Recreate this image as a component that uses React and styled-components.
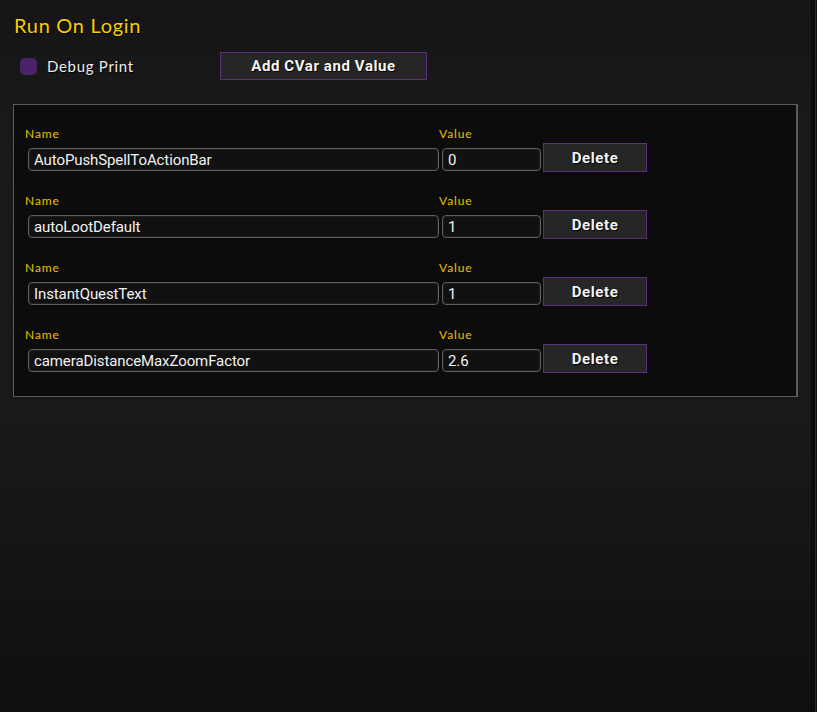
import React from 'react';
import styled, { createGlobalStyle } from 'styled-components';

const GlobalStyle = createGlobalStyle`
  html, body {
    margin: 0;
    padding: 0;
    background: #0e0e0f;
  }
`;

const Page = styled.div`
  position: relative;
  width: 817px;
  height: 712px;
  overflow: hidden;
  box-sizing: border-box;
  padding: 12px 20px 0 13px;
  background: linear-gradient(180deg, #151516 0%, #1a1a1c 20%, #19191b 60%, #0f0f10 100%);
  font-family: 'Open Sans', 'Liberation Sans', sans-serif;

  &::after {
    content: '';
    position: absolute;
    top: 0;
    right: 0;
    width: 6px;
    height: 100%;
    background: linear-gradient(90deg, #0c0c0c 0%, #0c0c0c 60%, #2a2a2a 60%, #2a2a2a 80%, #111 80%);
  }
`;

const Title = styled.h1`
  margin: 0 0 0 1px;
  font-family: 'Lato', 'Open Sans', sans-serif;
  font-weight: 400;
  font-size: 20px;
  line-height: 27px;
  letter-spacing: 0.7px;
  color: #f8cf00;
  text-shadow: 1px 1px 1px #000;
`;

const Toolbar = styled.div`
  display: flex;
  align-items: center;
  height: 28px;
  margin-top: 13px;
`;

const CheckLabel = styled.label`
  box-sizing: border-box;
  display: flex;
  align-items: center;
  gap: 10px;
  width: 207px;
  padding-left: 7px;
  font-family: 'Lato', 'Open Sans', sans-serif;
  font-size: 15px;
  color: #ececec;
  letter-spacing: 0.7px;
  text-shadow: 1px 1px 1px #000;
`;

const Box = styled.span`
  display: block;
  width: 17px;
  height: 17px;
  border-radius: 5px;
  background: #4b2368;
`;

const Button = styled.button`
  box-sizing: border-box;
  width: ${p => p.$w}px;
  height: ${p => p.$h}px;
  margin-left: ${p => p.$ml || 0}px;
  padding: 0;
  border: 1px solid #5b2f7a;
  background: #262626;
  color: #f4f4f4;
  font-family: 'Roboto', 'Liberation Sans', sans-serif;
  font-weight: 700;
  font-size: 15px;
  letter-spacing: 0.6px;
  text-shadow: 1px 1px 1px #000;
  cursor: pointer;
`;

const Panel = styled.div`
  box-sizing: border-box;
  width: 785px;
  height: 293px;
  margin-top: 24px;
  padding: 22px 0 0 11px;
  background: #0c0c0c;
  border: 1px solid #5c5c5c;
  border-right-width: 2px;
  display: flex;
  flex-direction: column;
  gap: 22px;
`;

const Entry = styled.div`
  display: grid;
  grid-template-columns: 414px 101px 104px;
  grid-template-rows: 14px auto;
  row-gap: 2px;
  align-items: end;
`;

const FieldLabel = styled.span`
  font-family: 'Lato', 'Open Sans', sans-serif;
  font-size: 12px;
  line-height: 14px;
  letter-spacing: 0.9px;
  color: #e8c000;
`;

const Input = styled.input`
  box-sizing: border-box;
  width: ${p => p.$w}px;
  height: 23px;
  margin-left: 3px;
  margin-bottom: 1px;
  padding: 0 5px;
  border: 1px solid #5e5e5a;
  border-radius: 4px;
  background: #111111;
  color: #f2f2f2;
  font-family: 'Roboto', 'Liberation Sans', sans-serif;
  font-size: 15px;
  letter-spacing: -0.1px;
  box-shadow: inset 0 0 0 1px #1e1e1e;
  outline: none;
`;

const entries = [
  { name: 'AutoPushSpellToActionBar', value: '0' },
  { name: 'autoLootDefault', value: '1' },
  { name: 'InstantQuestText', value: '1' },
  { name: 'cameraDistanceMaxZoomFactor', value: '2.6' },
];

export default function App() {
  return (
    <>
      <GlobalStyle />
      <Page>
        <Title>Run On Login</Title>
        <Toolbar>
          <CheckLabel>
            <Box />
            Debug Print
          </CheckLabel>
          <Button $w={207} $h={28}>Add CVar and Value</Button>
        </Toolbar>
        <Panel>
          {entries.map(e => (
            <Entry key={e.name}>
              <FieldLabel>Name</FieldLabel>
              <FieldLabel>Value</FieldLabel>
              <span />
              <Input $w={411} defaultValue={e.name} />
              <Input $w={99} defaultValue={e.value} />
              <Button $w={104} $h={29} $ml={3}>Delete</Button>
            </Entry>
          ))}
        </Panel>
      </Page>
    </>
  );
}
